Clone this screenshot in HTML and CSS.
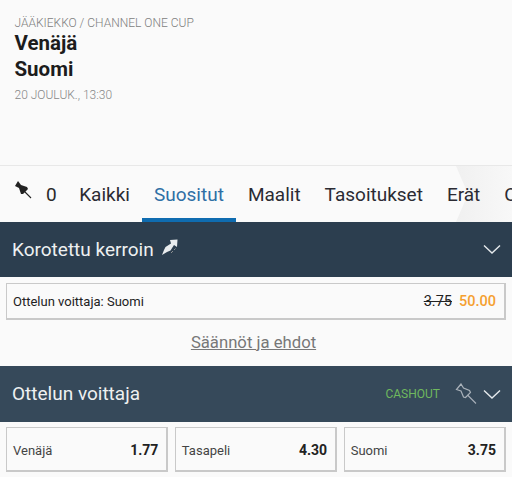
FILE: index.html
```html
<!DOCTYPE html>
<html>
<head>
    <title>Venäjä - Suomi</title>
    <link rel="stylesheet" href="styles.css">
</head>
<body>
<div class="event">
    <div class="league">JÄÄKIEKKO / CHANNEL ONE CUP</div>
    <div class="team">Venäjä</div>
    <div class="team">Suomi</div>
    <div class="time">20 JOULUK., 13:30</div>
</div>

<div class="tabs">
    <div class="tabs-fade"></div>
    <div class="tab-pin">
        <svg class="pin" width="18" height="18" viewBox="0 0 18 18">
            <path d="M4 0 L1 5 L5 7 L7 13 L9 13 L14 8 L13 6 L7 4 Z" fill="#222"/>
            <path d="M10 10 L17 17" stroke="#222" stroke-width="1.1"/>
        </svg>
        <span>0</span>
    </div>
    <a class="tab">Kaikki</a>
    <a class="tab active">Suositut</a>
    <a class="tab">Maalit</a>
    <a class="tab">Tasoitukset</a>
    <a class="tab">Erät</a>
    <a class="tab">Ottelu</a>
</div>

<div class="bar">
    <div class="bar-title">Korotettu kerroin
        <svg class="boost" width="17" height="17" viewBox="0 0 17 17">
            <path d="M9 1 L16.5 0.5 L16 8 L13 6 L9.5 11.5 L6 13 L1 16 L3 11 L4.5 8 L10 4.5 Z" fill="#e9ecee"/>
            <path d="M10 14 L12 12 M13 11 L14.5 9.5" stroke="#8d8f90" stroke-width="1"/>
        </svg>
    </div>
    <svg class="chevron" width="18" height="11" viewBox="0 0 18 11">
        <path d="M1 1.5 L9 9 L17 1.5" fill="none" stroke="#e6eaed" stroke-width="1.4"/>
    </svg>
</div>
<div class="boosted">
    <span class="boosted-name">Ottelun voittaja: Suomi</span>
    <span class="old-odds">3.75</span>
    <span class="new-odds">50.00</span>
</div>
<div class="terms"><a>Säännöt ja ehdot</a></div>

<div class="bar bar-light">
    <div class="bar-title">Ottelun voittaja</div>
    <span class="cashout">CASHOUT</span>
    <svg class="pin-outline" width="22" height="22" viewBox="0 0 22 22">
        <path d="M6 1 L1.5 6.5 L6 8 L8.5 14 L10.5 14.5 L15.5 9.5 L14.5 7.5 L8.5 5 Z" fill="none" stroke="#aab2ba" stroke-width="1.2"/>
        <path d="M12.5 12 L21 20.5" stroke="#aab2ba" stroke-width="1.1"/>
    </svg>
    <svg class="chevron" width="18" height="11" viewBox="0 0 18 11">
        <path d="M1 1.5 L9 9 L17 1.5" fill="none" stroke="#e6eaed" stroke-width="1.4"/>
    </svg>
</div>
<div class="odds-row">
    <div class="odd"><span class="odd-name">Venäjä</span><span class="odd-value">1.77</span></div>
    <div class="odd"><span class="odd-name">Tasapeli</span><span class="odd-value">4.30</span></div>
    <div class="odd"><span class="odd-name">Suomi</span><span class="odd-value">3.75</span></div>
</div>
</body>
</html>
```

FILE: styles.css
```css
html, body {
    height: 100%;
    overflow: hidden;
}

body {
    margin: 0;
    background: #fafafa;
    font-family: Roboto, sans-serif;
    color: #222;
}

.event {
    height: 166px;
    box-sizing: border-box;
    padding: 16px 15px 0 14.5px;
    border-bottom: 1px solid #e8e8e8;
}

.league {
    font-size: 12px;
    font-weight: 300;
    line-height: 14px;
    color: #808080;
}

.team {
    font-size: 20.5px;
    font-weight: 700;
    line-height: 26px;
    color: #1c1c1c;
}

.team + .team {
    margin-bottom: 3px;
}

.time {
    font-size: 12px;
    font-weight: 300;
    line-height: 20px;
    color: #888;
}

.tabs {
    display: flex;
    height: 56px;
    position: relative;
    overflow: hidden;
    white-space: nowrap;
    font-size: 19px;
}

.tab-pin {
    display: flex;
    align-items: center;
    padding-left: 14px;
    margin-right: 10.5px;
    position: relative;
}

.tab-pin .pin {
    margin: -8px 14px 0 0;
}

.tab-pin span {
    color: #2a2a2a;
}

.tab {
    display: flex;
    align-items: center;
    padding: 0 12px;
    color: #2b2b33;
    position: relative;
}

.tab.active {
    color: #2f6fa5;
    box-shadow: inset 0 -4px 0 #0f6cb0;
}

.tabs-fade {
    position: absolute;
    top: 0;
    right: 0;
    width: 56px;
    height: 100%;
    background: linear-gradient(to right, #f0f0f0, #f8f8f8);
    clip-path: polygon(0 0, 100% 0, 100% 100%, 0 100%, 12px 50%);
}

.bar {
    display: flex;
    align-items: center;
    height: 55px;
    padding: 0 11px 0 12px;
    background: #2c3e4f;
    color: #eef0f1;
}

.bar-light {
    height: 56px;
    background: #36495a;
}

.bar-title {
    flex: 1;
    display: flex;
    align-items: center;
    font-size: 19px;
    line-height: 24px;
}

.bar-title .boost {
    margin: -5px 0 0 7px;
}

.cashout {
    font-size: 12px;
    color: #6fb85e;
    margin-right: 15px;
}

.pin-outline {
    margin-right: 6px;
}

.boosted {
    display: flex;
    align-items: center;
    height: 37px;
    box-sizing: border-box;
    margin: 6px 6px 0;
    padding: 0 8px 0 6px;
    border: 1px solid #c9c9c9;
    border-width: 1px 2px 2px 1px;
    font-size: 13px;
}

.boosted-name {
    flex: 1;
}

.old-odds {
    font-size: 14.5px;
    text-decoration: line-through;
    margin-right: 7px;
}

.new-odds {
    font-size: 14.5px;
    font-weight: 500;
    color: #f5a030;
}

.terms {
    height: 46px;
    padding-right: 5px;
    line-height: 46px;
    text-align: center;
    font-size: 16.7px;
    color: #777;
    text-decoration: underline;
}

.odds-row {
    display: flex;
    gap: 6.5px;
    margin: 5px 6px 0;
}

.odd {
    flex: 1;
    display: flex;
    align-items: center;
    justify-content: space-between;
    height: 45px;
    box-sizing: border-box;
    padding: 0 8px 0 6px;
    border: 1px solid #c9c9c9;
    border-width: 1px 2px 2px 1px;
}

.odd-name {
    font-size: 13px;
    color: #444;
    margin-top: 3px;
}

.odd-value {
    font-size: 14px;
    font-weight: 700;
    color: #222;
    margin-top: 1px;
}
```
